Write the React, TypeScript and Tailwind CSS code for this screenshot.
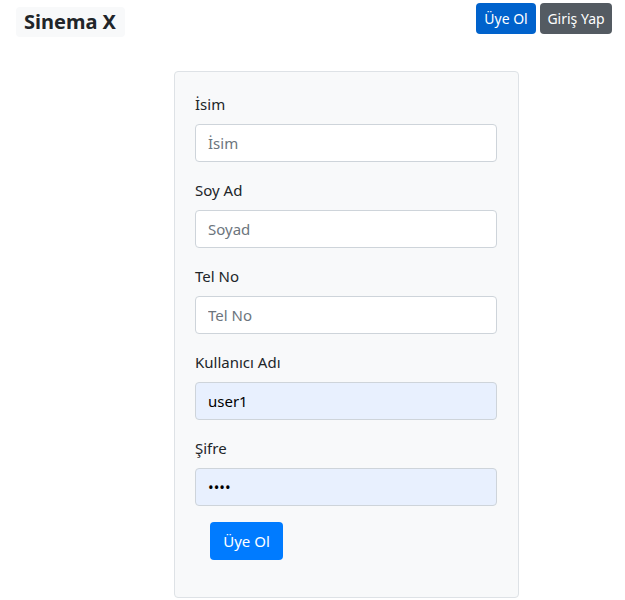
export default function App() {
  const fields = [
    { label: "İsim", placeholder: "İsim", value: "", type: "text" },
    { label: "Soy Ad", placeholder: "Soyad", value: "", type: "text" },
    { label: "Tel No", placeholder: "Tel No", value: "", type: "text" },
    { label: "Kullanıcı Adı", placeholder: "Kullanıcı Adı", value: "user1", type: "text" },
    { label: "Şifre", placeholder: "Şifre", value: "1234", type: "password" },
  ];

  return (
    <div className="min-h-[600px] bg-white text-[#212529] font-['Noto_Sans',sans-serif]">
      {/* Navbar */}
      <div className="flex items-start justify-between pl-4 pr-[13px]">
        <div className="mt-[7px] h-[30px] rounded-[4px] bg-[#f8f9fa] pl-2 pr-[9px] flex items-center text-[20px] font-bold leading-none">
          Sinema X
        </div>
        <div className="mt-[3px] flex gap-1">
          <button className="h-[31px] w-[60px] rounded-[4px] bg-[#0062cc] text-[14px] text-white">Üye Ol</button>
          <button className="h-[31px] w-[72px] rounded-[4px] bg-[#545b62] text-[14px] text-white">Giriş Yap</button>
        </div>
      </div>

      {/* Form */}
      <div className="ml-[174px] mt-[34px] w-[345px] rounded-[4px] border border-[#dee2e6] bg-[#f8f9fa] pl-5 pr-[21px] pt-5 pb-[37px]">
        {fields.map((f) => (
          <div key={f.label} className="mb-4">
            <label className="mb-2 block text-[15px] leading-6">{f.label}</label>
            <input
              type={f.type}
              defaultValue={f.value}
              placeholder={f.placeholder}
              className={`block h-[38px] w-full rounded-[4px] border border-[#ced4da] px-3 text-[15px] outline-none placeholder:text-[#6c757d] ${
                f.value ? "bg-[#e8f0fe] text-black" : "bg-white"
              }`}
            />
          </div>
        ))}
        <button className="ml-[15px] h-[38px] w-[73px] rounded-[4px] bg-[#007bff] text-[15px] text-white">Üye Ol</button>
      </div>
    </div>
  );
}
